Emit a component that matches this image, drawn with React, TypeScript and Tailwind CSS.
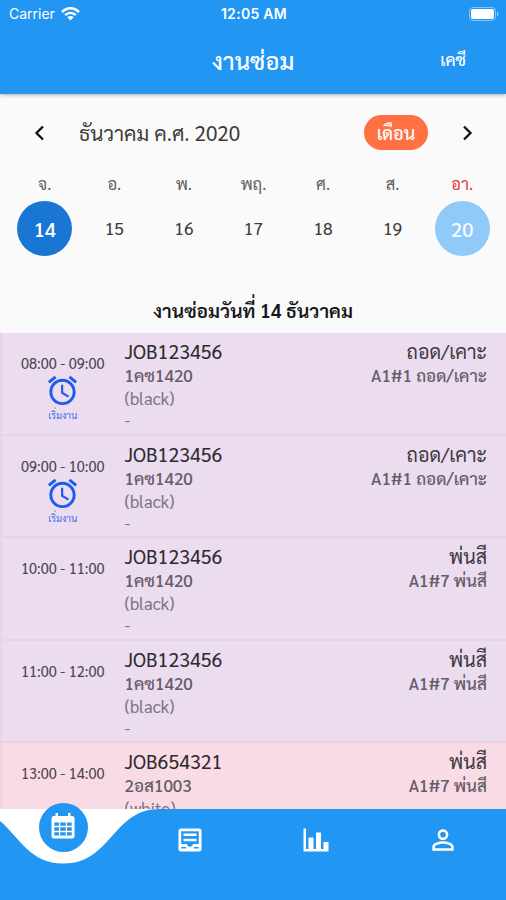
import { MdAlarm, MdPersonOutline } from 'react-icons/md';

type Job = {
  time: string;
  code: string;
  plate: string;
  color: string;
  task: string;
  station: string;
  note?: string;
  canStart?: boolean;
  tone: string;
};

const purple = 'bg-[#ebdcef] border-[#e8d2e6]';
const pink = 'bg-[#f9dbe5] border-[#f5d0dd]';

const jobs: Job[] = [
  { time: '08:00 - 09:00', code: 'JOB123456', plate: '1คซ1420', color: '(black)', task: 'ถอด/เคาะ', station: 'A1#1 ถอด/เคาะ', note: '-', canStart: true, tone: purple },
  { time: '09:00 - 10:00', code: 'JOB123456', plate: '1คซ1420', color: '(black)', task: 'ถอด/เคาะ', station: 'A1#1 ถอด/เคาะ', note: '-', canStart: true, tone: purple },
  { time: '10:00 - 11:00', code: 'JOB123456', plate: '1คซ1420', color: '(black)', task: 'พ่นสี', station: 'A1#7 พ่นสี', note: '-', tone: purple },
  { time: '11:00 - 12:00', code: 'JOB123456', plate: '1คซ1420', color: '(black)', task: 'พ่นสี', station: 'A1#7 พ่นสี', note: '-', tone: purple },
  { time: '13:00 - 14:00', code: 'JOB654321', plate: '2อส1003', color: '(white)', task: 'พ่นสี', station: 'A1#7 พ่นสี', tone: pink },
];

const days = [
  { name: 'จ.', date: 14, selected: true },
  { name: 'อ.', date: 15 },
  { name: 'พ.', date: 16 },
  { name: 'พฤ.', date: 17 },
  { name: 'ศ.', date: 18 },
  { name: 'ส.', date: 19 },
  { name: 'อา.', date: 20, today: true },
];

export default function App() {
  return (
    <div className="flex h-[900px] w-[506px] flex-col overflow-hidden bg-[#fafafa] font-['Sarabun','Noto_Sans',sans-serif] whitespace-nowrap">
      <Header />
      <Calendar />
      <h2 className="h-[43px] shrink-0 text-center text-[19.2px] leading-[40px] font-semibold text-[#151515]">
        งานซ่อมวันที่ 14 ธันวาคม
      </h2>
      <div className="min-h-0 flex-1 overflow-hidden">
        {jobs.map((job) => (
          <JobRow key={job.time} job={job} />
        ))}
      </div>
      <BottomNav />
    </div>
  );
}

function Header() {
  return (
    <header className="z-10 h-[94px] shrink-0 bg-[#2196f3] text-white shadow-[0_1px_4px_rgba(0,0,0,0.3)]">
      {/* Status bar */}
      <div className="grid h-[27px] grid-cols-3 items-center pr-[7px] pl-[9px] font-['Inter',sans-serif] text-[14px]">
        <div className="flex items-center gap-[6px]">
          <span>Carrier</span>
          <svg width="19" height="14" viewBox="0 0 19 14" fill="none" stroke="white" strokeWidth="2.5">
            <path d="M1 5.1C6-.1 13-.1 18 5.1M4.2 8.2c3.2-3.1 7.4-3.1 10.6 0" />
            <path d="M9.5 13.5 6.3 10.3c1.9-1.7 4.5-1.7 6.4 0Z" fill="white" stroke="none" />
          </svg>
        </div>
        <span className="text-center font-semibold tracking-[0.3px]">12:05 AM</span>
        <svg className="justify-self-end" width="30" height="14" viewBox="0 0 30 14">
          <rect x="0.5" y="0.5" width="26" height="13" rx="3.5" fill="none" stroke="white" strokeOpacity="0.45" />
          <rect x="2" y="2" width="23" height="10" rx="2" fill="white" />
          <path d="M28 4.5c2 .7 2 4.3 0 5Z" fill="white" fillOpacity="0.5" />
        </svg>
      </div>
      {/* Title bar */}
      <div className="grid h-[65px] grid-cols-3 items-center">
        <h1 className="col-start-2 text-center text-[24px] font-medium">งานซ่อม</h1>
        <span className="pr-[40px] text-right text-[16.5px] font-medium">เคซี</span>
      </div>
    </header>
  );
}

function Calendar() {
  return (
    <section className="h-[196px] shrink-0 pt-[20px] pr-[9px] pl-[10px]">
      <div className="flex h-[37px] items-center pr-[22px] pl-[22px]">
        <Chevron d="M11 1.5 4.5 8l6.5 6.5" />
        <span className="ml-[31px] flex-1 text-[20.7px] text-[#3c3c3c]">ธันวาคม ค.ศ. 2020</span>
        <button className="mr-[31px] h-[35px] w-[64px] rounded-full bg-[#ff7043] text-[18px] font-medium text-white">เดือน</button>
        <Chevron d="M5 1.5 11.5 8 5 14.5" />
      </div>
      <div className="mt-[21px] grid grid-cols-7">
        {days.map((day) => (
          <div key={day.date} className="flex flex-col items-center">
            <span className={`h-[29px] text-[16.5px] leading-[23px] ${day.today ? 'text-[#e53935]' : 'text-[#616161]'}`}>{day.name}</span>
            <span
              className={`flex size-[55px] items-center justify-center rounded-full ${
                day.selected ? 'bg-[#1976d2] text-[20px] font-medium text-white' : day.today ? 'bg-[#90caf9] text-[20px] font-medium text-[#fafafa]' : 'text-[17.5px] text-[#3c3c3c]'
              }`}
            >
              {day.date}
            </span>
          </div>
        ))}
      </div>
    </section>
  );
}

function Chevron({ d }: { d: string }) {
  return (
    <svg width="16" height="16" viewBox="0 0 16 16" fill="none" stroke="#111" strokeWidth="2.3">
      <path d={d} />
    </svg>
  );
}

function JobRow({ job }: { job: Job }) {
  return (
    <div className={`flex h-[102.5px] border-b-2 border-l-2 pt-[6px] pr-[19px] ${job.tone}`}>
      <div className="flex w-[122.5px] flex-col items-center pt-[13px] pr-[1px]">
        <span className="text-[14.6px] leading-[22px] text-[#4a434c]">{job.time}</span>
        {job.canStart && (
          <>
            <MdAlarm className="-mt-[1px] size-[35px] text-[#1e5bf0]" />
            <span className="text-[9.8px] leading-[15px] text-[#3f6ff0]">เริ่มงาน</span>
          </>
        )}
      </div>
      <div className="flex-1">
        <p className="text-[19.6px] leading-[24px] text-[#302b32]">{job.code}</p>
        <p className="text-[17px] leading-[24px] font-medium text-[#655d68]">{job.plate}</p>
        <p className="text-[17px] leading-[22px] text-[#7d7480]">{job.color}</p>
        {job.note && <p className="text-[17px] leading-[21px] text-[#7d7480]">{job.note}</p>}
      </div>
      <div className="text-right">
        <p className="text-[19.6px] leading-[24px] text-[#3f3942]">{job.task}</p>
        <p className="text-[17px] leading-[24px] font-medium text-[#655d68]">{job.station}</p>
      </div>
    </div>
  );
}

function BottomNav() {
  return (
    <nav className="relative grid h-[91px] shrink-0 grid-cols-4 bg-[#2196f3] text-white">
      {/* Notch behind the active tab */}
      <svg className="absolute top-0 left-0" width="170" height="60" viewBox="0 0 170 60">
        <path d="M-33 0C15 0 15 54.5 63.5 54.5S112 0 160 0Z" fill="white" />
      </svg>
      <div className="relative -top-[6px] flex size-[49px] items-center justify-center justify-self-center rounded-full bg-[#2196f3]">
        <svg className="-mt-[3px]" width="24" height="26" viewBox="0 0 24 26">
          <path
            d="M3 3H4.5V0H7V3H17V0H19.5V3H21a2.5 2.5 0 0 1 2.5 2.5V23a2.5 2.5 0 0 1-2.5 2.500H3A2.5 2.5 0 0 1 .5 23V5.5A2.5 2.5 0 0 1 3 3ZM3.3 9.500V22.500H20.700V9.500Z"
            fill="white"
            fillRule="evenodd"
          />
          <path d="M8.600 9.500v13M15.400 9.500v13M3 13.500h18M3 18.500h18" stroke="white" strokeWidth="1.300" />
        </svg>
      </div>
      <div className="flex h-[61px] items-center justify-center">
        <svg width="24" height="24" viewBox="0 0 24 24">
          <path
            d="M3 .5h18A2.5 2.5 0 0 1 23.5 3v18a2.5 2.5 0 0 1-2.5 2.5H3A2.5 2.5 0 0 1 .5 21V3A2.5 2.5 0 0 1 3 .5ZM3.2 3.2V16H9C9.5 19.5 14.5 19.5 15 16H20.8V3.2ZM3.2 19V20.6H8V19ZM16 19V20.6H20.8V19Z"
            fill="white"
            fillRule="evenodd"
          />
          <path d="M5.5 6.8h13M5.5 12h13" stroke="white" strokeWidth="2.6" />
        </svg>
      </div>
      <div className="flex h-[61px] items-center justify-center">
        <svg width="26" height="24" viewBox="0 0 26 24" fill="white">
          <path d="M.5.5H3V21H5.5V9.5h5V21h2.500V4.500h5V21h2.500V14H25.500v9.500H.5Z" />
        </svg>
      </div>
      <div className="flex h-[61px] items-center justify-center pl-[1px]">
        <MdPersonOutline className="size-[32px]" />
      </div>
    </nav>
  );
}
